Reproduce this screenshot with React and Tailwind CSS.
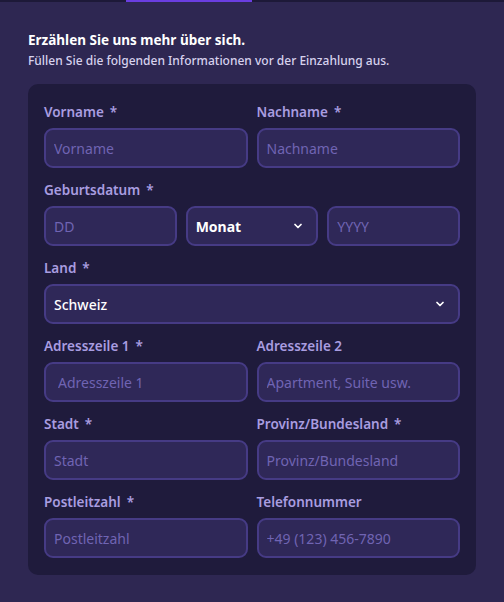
import React from 'react';

const font = { fontFamily: '"Noto Sans", "Open Sans", sans-serif' };

function Label({ children, required }) {
  return (
    <label className="block text-[13.5px] leading-4 font-semibold text-[#a99de0] mb-2">
      {children}
      {required && <span className="ml-1.5">*</span>}
    </label>
  );
}

function Input({ placeholder, className = '' }) {
  return (
    <input
      type="text"
      placeholder={placeholder}
      className={`w-full h-[40px] rounded-[9px] bg-[#2f2858] border-2 border-[#463b85] px-[8px] text-[14px] text-white placeholder:text-[#7064b3] outline-none ${className}`}
    />
  );
}

function Chevron() {
  return (
    <svg width="12" height="12" viewBox="0 0 24 24" fill="none" stroke="white" strokeWidth="3.5" strokeLinecap="round" strokeLinejoin="round">
      <path d="M6 9l6 6 6-6" />
    </svg>
  );
}

function Select({ value, bold }) {
  return (
    <div className="w-full h-[40px] rounded-[9px] bg-[#2f2858] border-2 border-[#463b85] px-[8px] flex items-center justify-between">
      <span className={`text-[14px] text-white ${bold ? 'font-bold' : 'font-medium'}`}>{value}</span>
      <span className="mr-[4px] flex"><Chevron /></span>
    </div>
  );
}

function Field({ label, required, children }) {
  return (
    <div>
      <Label required={required}>{label}</Label>
      {children}
    </div>
  );
}

export default function App() {
  return (
    <div className="min-h-[602px] w-full bg-[#2e2752]" style={font}>
      <div className="h-[2px] bg-[#1d1938] flex">
        <div className="ml-[126px] w-[126px] bg-[#6a3ee0]" />
      </div>
      <div className="px-7 pt-[28px]">
        <h2 className="text-[13.5px] leading-5 font-bold text-white">Erzählen Sie uns mehr über sich.</h2>
        <p className="text-[12px] leading-4 mt-[3px] font-medium text-[#d7d2ee]">Füllen Sie die folgenden Informationen vor der Einzahlung aus.</p>

        <div className="mt-[15px] bg-[#1f1b3c] rounded-[10px] px-4 pt-[20px] pb-[17px] flex flex-col gap-[14px]">
          <div className="grid grid-cols-2 gap-[9px]">
            <Field label="Vorname" required><Input placeholder="Vorname" /></Field>
            <Field label="Nachname" required><Input placeholder="Nachname" /></Field>
          </div>

          <Field label="Geburtsdatum" required>
            <div className="grid grid-cols-3 gap-[9px]">
              <Input placeholder="DD" />
              <Select value="Monat" bold />
              <Input placeholder="YYYY" />
            </div>
          </Field>

          <Field label="Land" required>
            <Select value="Schweiz" />
          </Field>

          <div className="grid grid-cols-2 gap-[9px]">
            <Field label="Adresszeile 1" required><Input placeholder="Adresszeile 1" className="pl-[12px]" /></Field>
            <Field label="Adresszeile 2"><Input placeholder="Apartment, Suite usw." /></Field>
          </div>

          <div className="grid grid-cols-2 gap-[9px]">
            <Field label="Stadt" required><Input placeholder="Stadt" /></Field>
            <Field label="Provinz/Bundesland" required><Input placeholder="Provinz/Bundesland" /></Field>
          </div>

          <div className="grid grid-cols-2 gap-[9px]">
            <Field label="Postleitzahl" required><Input placeholder="Postleitzahl" /></Field>
            <Field label="Telefonnummer"><Input placeholder="+49 (123) 456-7890" /></Field>
          </div>
        </div>
      </div>
    </div>
  );
}
